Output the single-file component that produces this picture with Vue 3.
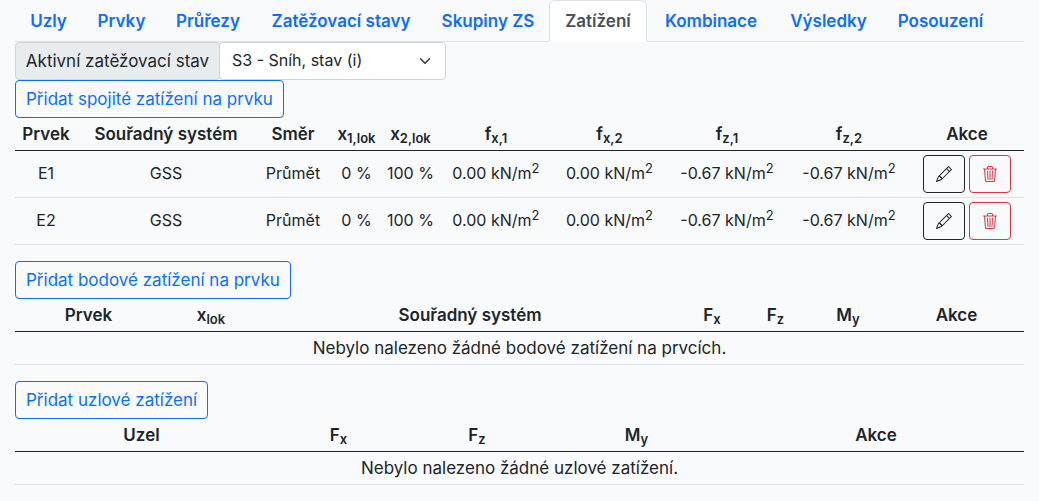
<script setup>
import { ref } from 'vue'

const tabs = [
  { label: 'Uzly', width: 67 },
  { label: 'Prvky', width: 79 },
  { label: 'Průřezy', width: 94 },
  { label: 'Zatěžovací stavy', width: 172 },
  { label: 'Skupiny ZS', width: 122 },
  { label: 'Zatížení', width: 98 },
  { label: 'Kombinace', width: 128 },
  { label: 'Výsledky', width: 107 },
  { label: 'Posouzení', width: 117 }
]
const activeTab = ref('Zatížení')
const loadCase = ref('S3')

const distributedColumns = [
  { text: 'Prvek', share: 62 },
  { text: 'Souřadný systém', share: 178 },
  { text: 'Směr', share: 76 },
  { text: 'x', sub: '1,lok', share: 51 },
  { text: 'x', sub: '2,lok', share: 57 },
  { text: 'f', sub: 'x,1', share: 114 },
  { text: 'f', sub: 'x,2', share: 113 },
  { text: 'f', sub: 'z,1', share: 122 },
  { text: 'f', sub: 'z,2', share: 122 },
  { text: 'Akce', share: 114 }
]
const distributedLoads = [
  { member: 'E1', system: 'GSS', direction: 'Průmět', from: '0 %', to: '100 %', forces: ['0.00', '0.00', '-0.67', '-0.67'] },
  { member: 'E2', system: 'GSS', direction: 'Průmět', from: '0 %', to: '100 %', forces: ['0.00', '0.00', '-0.67', '-0.67'] }
]

const emptySections = [
  {
    action: 'Přidat bodové zatížení na prvku',
    message: 'Nebylo nalezeno žádné bodové zatížení na prvcích.',
    columns: [
      { text: 'Prvek', share: 147 },
      { text: 'x', sub: 'lok', share: 98 },
      { text: 'Souřadný systém', share: 420 },
      { text: 'F', sub: 'x', share: 64 },
      { text: 'F', sub: 'z', share: 63 },
      { text: 'M', sub: 'y', share: 82 },
      { text: 'Akce', share: 135 }
    ]
  },
  {
    action: 'Přidat uzlové zatížení',
    message: 'Nebylo nalezeno žádné uzlové zatížení.',
    columns: [
      { text: 'Uzel', share: 253 },
      { text: 'F', sub: 'x', share: 141 },
      { text: 'F', sub: 'z', share: 136 },
      { text: 'M', sub: 'y', share: 183 },
      { text: 'Akce', share: 296 }
    ]
  }
]

function colWidth(columns, column) {
  const total = columns.reduce((sum, c) => sum + c.share, 0)
  return { width: (column.share / total) * 100 + '%' }
}
</script>

<template>
  <main class="page">
    <nav class="tabs">
      <a
        v-for="tab in tabs"
        :key="tab.label"
        href="#"
        class="tab"
        :class="{ active: tab.label === activeTab }"
        :style="{ flexBasis: tab.width + 'px' }"
        @click.prevent="activeTab = tab.label"
      >{{ tab.label }}</a>
    </nav>

    <div class="input-group">
      <label class="group-label" for="load-case">Aktivní zatěžovací stav</label>
      <div class="select-wrap">
        <select id="load-case" v-model="loadCase" class="select">
          <option value="S3">S3 - Sníh, stav (i)</option>
        </select>
        <svg class="chevron" viewBox="0 0 16 16" aria-hidden="true">
          <path d="m2 5 6 6 6-6" fill="none" stroke="#343a40" stroke-width="2" stroke-linecap="round" stroke-linejoin="round" />
        </svg>
      </div>
    </div>

    <section class="section">
      <button type="button" class="btn primary">Přidat spojité zatížení na prvku</button>
      <table class="table">
        <colgroup>
          <col v-for="(c, i) in distributedColumns" :key="i" :style="colWidth(distributedColumns, c)">
        </colgroup>
        <thead>
          <tr>
            <th v-for="(c, i) in distributedColumns" :key="i" scope="col">{{ c.text }}<sub v-if="c.sub">{{ c.sub }}</sub></th>
          </tr>
        </thead>
        <tbody>
          <tr v-for="load in distributedLoads" :key="load.member">
            <td>{{ load.member }}</td>
            <td>{{ load.system }}</td>
            <td>{{ load.direction }}</td>
            <td>{{ load.from }}</td>
            <td>{{ load.to }}</td>
            <td v-for="(force, i) in load.forces" :key="i">{{ force }} kN/m<sup>2</sup></td>
            <td class="action-cell">
              <div class="actions">
                <button type="button" class="btn dark" aria-label="Upravit">
                  <svg class="icon" viewBox="0 0 16 16" fill="currentColor" aria-hidden="true">
                    <path d="M12.146.146a.5.5 0 0 1 .708 0l3 3a.5.5 0 0 1 0 .708l-10 10a.5.5 0 0 1-.168.11l-5 2a.5.5 0 0 1-.65-.65l2-5a.5.5 0 0 1 .11-.168zM11.207 2.5 13.5 4.793 14.793 3.5 12.5 1.207zm1.586 3L10.5 3.207 4 9.707V10h.5a.5.5 0 0 1 .5.5v.5h.5a.5.5 0 0 1 .5.5v.5h.293zm-9.761 5.175-.106.106-1.528 3.821 3.821-1.528.106-.106A.5.5 0 0 1 5 12.5V12h-.5a.5.5 0 0 1-.5-.5V11h-.5a.5.5 0 0 1-.468-.325" />
                  </svg>
                </button>
                <button type="button" class="btn danger" aria-label="Smazat">
                  <svg class="icon" viewBox="0 0 16 16" fill="currentColor" aria-hidden="true">
                    <path d="M6.5 1h3a.5.5 0 0 1 .5.5v1H6v-1a.5.5 0 0 1 .5-.5M11 2.5v-1A1.5 1.5 0 0 0 9.5 0h-3A1.5 1.5 0 0 0 5 1.5v1H1.5a.5.5 0 0 0 0 1h.538l.853 10.66A2 2 0 0 0 4.885 16h6.23a2 2 0 0 0 1.994-1.84l.853-10.66h.538a.5.5 0 0 0 0-1zm1.958 1-.846 10.58a1 1 0 0 1-.997.92h-6.23a1 1 0 0 1-.997-.92L3.042 3.5zm-7.487 1a.5.5 0 0 1 .528.47l.5 8.5a.5.5 0 0 1-.998.06L5 5.03a.5.5 0 0 1 .47-.53Zm5.058 0a.5.5 0 0 1 .47.53l-.5 8.5a.5.5 0 1 1-.998-.06l.5-8.5a.5.5 0 0 1 .528-.47M8 4.5a.5.5 0 0 1 .5.5v8.5a.5.5 0 0 1-1 0V5a.5.5 0 0 1 .5-.5" />
                  </svg>
                </button>
              </div>
            </td>
          </tr>
        </tbody>
      </table>
    </section>

    <section v-for="section in emptySections" :key="section.action" class="section">
      <button type="button" class="btn primary">{{ section.action }}</button>
      <table class="table">
        <colgroup>
          <col v-for="(c, i) in section.columns" :key="i" :style="colWidth(section.columns, c)">
        </colgroup>
        <thead>
          <tr>
            <th v-for="(c, i) in section.columns" :key="i" scope="col">{{ c.text }}<sub v-if="c.sub">{{ c.sub }}</sub></th>
          </tr>
        </thead>
        <tbody>
          <tr>
            <td class="empty" :colspan="section.columns.length">{{ section.message }}</td>
          </tr>
        </tbody>
      </table>
    </section>
  </main>
</template>

<style>
html {
  background: #f8fafc;
}
</style>

<style scoped>
.page {
  padding: 0 15px;
  font-family: Inter, "Noto Sans", sans-serif;
  font-size: 16px;
  line-height: 24px;
  color: #212529;
}
.page *,
.page {
  box-sizing: border-box;
}
.tabs {
  display: flex;
  border-bottom: 1px solid #dee2e6;
}
.tab {
  flex: 0 0 auto;
  margin-bottom: -1px;
  padding: 8px 0;
  border: 1px solid transparent;
  border-radius: 6px 6px 0 0;
  color: #0d6efd;
  font-size: 17px;
  font-weight: 600;
  text-align: center;
  text-decoration: none;
  white-space: nowrap;
}
.tab.active {
  color: #495057;
  background: #fff;
  border-color: #dee2e6 #dee2e6 #fff;
}
.input-group {
  display: flex;
  max-width: 431px;
}
.group-label {
  flex: 0 0 205px;
  padding: 6px 0;
  border: 1px solid #ced4da;
  border-radius: 4px;
  background: #e9ecef;
  font-size: 17px;
  text-align: center;
  white-space: nowrap;
}
.select-wrap {
  position: relative;
  flex: 1;
  margin-left: -1px;
}
.select {
  display: block;
  width: 100%;
  padding: 5px 36px 7px 12px;
  border: 1px solid #ced4da;
  border-radius: 4px;
  background: #fff;
  color: #212529;
  font: inherit;
  appearance: none;
}
.chevron {
  position: absolute;
  top: 13px;
  right: 15px;
  width: 12px;
  height: 12px;
  pointer-events: none;
}
.section {
  margin-bottom: 16px;
}
.btn {
  display: block;
  padding: 6px 12px;
  border: 1px solid currentColor;
  border-radius: 4px;
  background: transparent;
  font: inherit;
  cursor: pointer;
}
.primary {
  padding: 6px 10px;
  color: #0d6efd;
  font-size: 17px;
}
.dark {
  color: #212529;
}
.danger {
  color: #dc3545;
}
.icon {
  display: block;
  width: 16px;
  height: 16px;
  margin: 4px 0;
}
.actions {
  display: flex;
  justify-content: center;
  gap: 4px;
}
.table {
  width: 100%;
  table-layout: fixed;
  border-collapse: separate;
  border-spacing: 0;
  text-align: center;
}
th,
td {
  height: 33px;
  padding: 3px 0 5px;
  border-bottom: 1px solid #dee2e6;
  vertical-align: middle;
  white-space: nowrap;
}
th {
  padding: 4px 0;
  border-bottom-color: #212529;
  font-size: 17px;
  font-weight: 600;
}
.action-cell {
  padding: 4px 0;
}
.empty {
  padding: 4px 0;
  font-size: 17px;
}
sub,
sup {
  position: relative;
  font-size: 13px;
  line-height: 0;
  vertical-align: baseline;
}
sub {
  bottom: -3px;
}
sup {
  top: -6px;
}
</style>
